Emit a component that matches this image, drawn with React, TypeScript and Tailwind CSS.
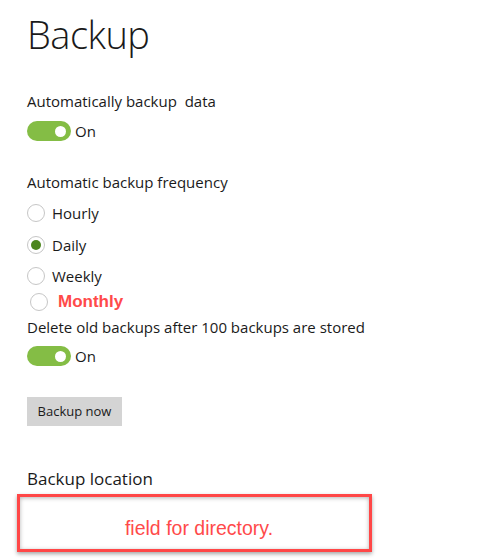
import React from "react";

function Toggle() {
  return (
    <div className="flex items-center h-[20px]">
      <div className="w-[44px] h-[20px] rounded-full bg-[#84bd45] flex items-center justify-end pr-[5px]">
        <div className="w-[11px] h-[11px] rounded-full bg-white" />
      </div>
      <span className="ml-[4px] text-[15px] text-[#1a1a1a] leading-[20px]">On</span>
    </div>
  );
}

function Radio({ label, checked }: { label: string; checked?: boolean }) {
  return (
    <div className="flex items-center h-[20px]">
      <div className="w-[18px] h-[18px] rounded-full border-[1.5px] border-[#c6c6c6] flex items-center justify-center bg-white">
        {checked && <div className="w-[10px] h-[10px] rounded-full bg-[#4c861d]" />}
      </div>
      <span className="ml-[7px] text-[15px] text-[#1a1a1a] leading-[20px]">{label}</span>
    </div>
  );
}

export default function App() {
  return (
    <div className="w-[489px] h-[558px] bg-white overflow-hidden pl-[27px] font-['Open_Sans',sans-serif] text-[#1a1a1a]">
      <h1 className="text-[38px] font-light leading-[40px] mt-[14px] tracking-[-0.5px]">Backup</h1>
      <p className="text-[15px] leading-[20px] mt-[37px]">Automatically backup&nbsp; data</p>
      <div className="mt-[10px]">
        <Toggle />
      </div>
      <p className="text-[15px] leading-[20px] mt-[31px]">Automatic backup frequency</p>
      <div className="mt-[11px] flex flex-col gap-[11.5px]">
        <Radio label="Hourly" />
        <Radio label="Daily" checked />
        <Radio label="Weekly" />
      </div>
      <div className="flex items-center h-[22px] mt-[5px] ml-[3px]">
        <div className="w-[18px] h-[18px] rounded-full border-[1.5px] border-[#c6c6c6] bg-white" />
        <span className="ml-[10px] text-[17px] font-bold text-[#ff4a4a] leading-[22px] font-['Liberation_Sans',sans-serif]">Monthly</span>
      </div>
      <p className="text-[15px] leading-[20px] mt-[4px]">Delete old backups after 100 backups are stored</p>
      <div className="mt-[9px]">
        <Toggle />
      </div>
      <button className="mt-[31px] h-[29px] w-[95px] bg-[#d4d4d4] text-[13px] text-[#1a1a1a] flex items-center justify-center">
        Backup now
      </button>
      <p className="text-[17px] leading-[22px] mt-[42px]">Backup location</p>
      <div className="mt-[4px] -ml-[10px] w-[355px] h-[58px] border-[3px] border-[#ff4747] shadow-[0_2px_4px_rgba(0,0,0,0.35),inset_0_1px_4px_rgba(0,0,0,0.3)] flex items-center justify-center pt-[12px] pl-[9px]">
        <span className="text-[19.5px] text-[#ff4a4a] font-['Liberation_Sans',sans-serif]">field for directory.</span>
      </div>
    </div>
  );
}
